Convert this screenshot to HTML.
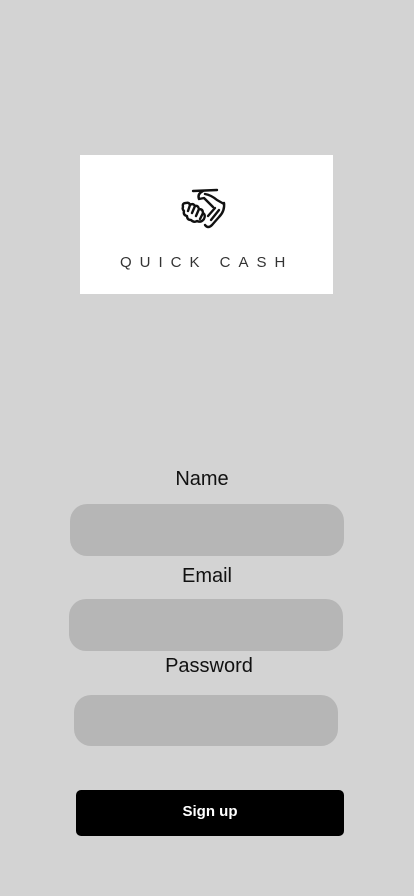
<!DOCTYPE html>
<html><head><meta charset="utf-8"><style>
body{margin:0;width:414px;height:896px;background:#d3d3d3;position:relative;font-family:"Liberation Sans",sans-serif;overflow:hidden}
.logo{position:absolute;left:80px;top:155px;width:253px;height:139px;background:#fff}
.lt{position:absolute;left:40px;top:99px;font-size:15px;letter-spacing:8px;color:#333;white-space:nowrap}
.lbl{position:absolute;font-size:20px;color:#111;transform:translateX(-50%)}
.f{position:absolute;background:#b6b6b6;border-radius:17px}
.btn{position:absolute;left:76px;top:790px;width:268px;height:46px;background:#000;border-radius:5px;color:#fff;font-weight:bold;font-size:15px;text-align:center;line-height:44px}
</style></head><body>
<div class="logo">
<svg style="position:absolute;left:100px;top:32px" width="48" height="46" viewBox="0 0 48 46" fill="none" stroke="#111" stroke-width="2.4" stroke-linecap="round" stroke-linejoin="round">
<path d="M13 4 L37 3"/>
<path d="M23 4 Q17 7 19 12 L24 11 L33 20"/>
<path d="M25 7 Q31 8 37 13 L44 17"/>
<path d="M44 16 Q45 24 39 30 L32 38 Q28 42 25 38"/>
<path d="M39 23 L31 33 M35 21 L28 29"/>
<path d="M3 20 Q2 16 6 16 Q9 15 10 18 Q13 16 15 19 Q18 18 19 22 Q23 22 23 26 Q26 28 24 32 Q21 36 17 34 Q14 36 11 33 Q7 33 7 29 Q3 28 4 24 Q2 22 3 20Z"/>
<path d="M10 18 L8 24 M15 19 L12 26 M19 22 L16 29 M23 26 L20 32"/>
</svg>
<div class="lt">QUICK CASH</div>
</div>
<div class="lbl" style="left:202px;top:468px">Name</div>
<div class="f" style="left:70px;top:504px;width:274px;height:52px"></div>
<div class="lbl" style="left:207px;top:565px">Email</div>
<div class="f" style="left:69px;top:599px;width:274px;height:52px"></div>
<div class="lbl" style="left:209px;top:655px">Password</div>
<div class="f" style="left:74px;top:695px;width:264px;height:51px"></div>
<div class="btn">Sign up</div>
</body></html>
